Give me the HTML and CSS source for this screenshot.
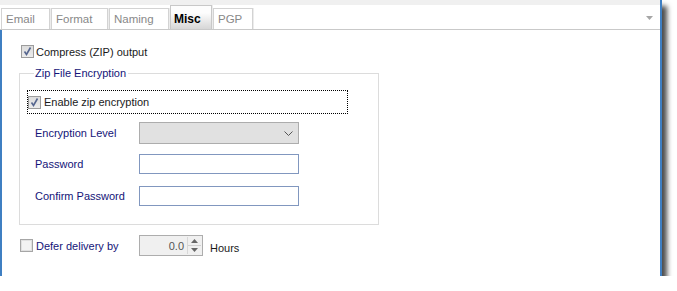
FILE: index.html
```html
<!DOCTYPE html>
<html>
<head>
<meta charset="utf-8">
<link rel="stylesheet" href="styles.css">
</head>
<body>
<div class="window">
  <div class="tabbar">
    <div class="tabs">
      <div class="tab t-email">Email</div>
      <div class="tab t-format">Format</div>
      <div class="tab t-naming">Naming</div>
      <div class="tab t-misc active">Misc</div>
      <div class="tab t-pgp">PGP</div>
    </div>
    <svg class="tabmenu" width="7" height="4" viewBox="0 0 7 4"><polygon points="0,0 7,0 3.5,4" fill="#a6a6a6"/></svg>
  </div>
  <div class="content">
    <div class="check-row compress">
      <span class="cb"><svg width="11" height="11" viewBox="0 0 11 11"><path d="M2.5 5.5 L4.5 8.5 L8.5 1.5" fill="none" stroke="#56668f" stroke-width="1.6"/></svg></span>
      <span class="txt">Compress (ZIP) output</span>
    </div>
    <fieldset class="group">
      <legend class="legend">Zip File Encryption</legend>
      <div class="focus-row">
        <span class="cb"><svg width="11" height="11" viewBox="0 0 11 11"><path d="M2.5 5.5 L4.5 8.5 L8.5 1.5" fill="none" stroke="#56668f" stroke-width="1.6"/></svg></span>
        <span class="txt">Enable zip encryption</span>
      </div>
      <div class="form-row r-level">
        <span class="lbl">Encryption Level</span>
        <div class="select"><svg width="9" height="5" viewBox="0 0 9 5"><polyline points="0.5,0.5 4.5,4.5 8.5,0.5" fill="none" stroke="#555" stroke-width="1"/></svg></div>
      </div>
      <div class="form-row r-pw">
        <span class="lbl">Password</span>
        <div class="input"></div>
      </div>
      <div class="form-row r-confirm">
        <span class="lbl">Confirm Password</span>
        <div class="input"></div>
      </div>
    </fieldset>
    <div class="defer-row">
      <span class="cb unchecked"></span>
      <span class="lbl defer-lbl">Defer delivery by</span>
      <div class="spinner">
        <span class="val">0.0</span>
        <span class="spin-btns">
          <span class="sb up"><svg width="7" height="4" viewBox="0 0 7 4"><polygon points="0,4 7,4 3.5,0" fill="#666"/></svg></span>
          <span class="sb down"><svg width="7" height="4" viewBox="0 0 7 4"><polygon points="0,0 7,0 3.5,4" fill="#666"/></svg></span>
        </span>
      </div>
      <span class="hours">Hours</span>
    </div>
  </div>
</div>
</body>
</html>
```

FILE: styles.css
```css
* { box-sizing: border-box; }
body {
  margin: 0;
  background: #fff;
  font-family: "Liberation Sans", Arial, sans-serif;
  font-size: 11px;
  color: #222;
}
.window {
  width: 662px;
  height: 276px;
  background: #fff;
  border-right: 2px solid #3f7fc2;
  box-shadow: 5px 6px 5px rgba(0, 0, 0, 0.7);
  display: flex;
  flex-direction: column;
}
.tabbar {
  height: 30px;
  border-top: 5px solid #f0f0f0;
  border-bottom: 1px solid #c9c9c9;
  display: flex;
  align-items: flex-end;
  justify-content: space-between;
}
.tabs {
  display: flex;
  align-items: flex-end;
  gap: 1px;
  padding-left: 1px;
}
.tab {
  height: 21px;
  border: 1px solid #d3d3d3;
  border-bottom: none;
  box-shadow: 1px 0 0 #ececec;
  background: #fff;
  color: #888;
  font-size: 11.5px;
  line-height: 13px;
  padding: 4px 0 0 4px;
}
.t-email { width: 49px; }
.t-format { width: 57px; }
.t-naming { width: 60px; }
.t-misc { width: 42px; }
.t-pgp { width: 40px; }
.tab.active {
  height: 24px;
  padding-top: 7px;
  padding-left: 3px;
  color: #000;
  font-weight: bold;
  font-size: 12px;
  border-color: #c8c8c8;
  background: linear-gradient(#fdfdfd 30%, #d6d6d6);
}
.tabmenu {
  align-self: center;
  margin-right: 7px;
  margin-top: 1px;
}
.content {
  flex: 1;
  border-left: 2px solid #3f7fc2;
  padding-left: 17px;
  display: flex;
  flex-direction: column;
  align-items: flex-start;
}
.cb {
  width: 13px;
  height: 13px;
  border: 1px solid #9c9c9c;
  background: linear-gradient(#dcdcdc, #ececec);
  display: flex;
  align-items: center;
  justify-content: center;
  flex: none;
}
.cb.unchecked {
  background: #f2f2f2;
  border-color: #a6a6a6;
  box-shadow: inset 0 0 0 1px #e0e0e0;
}
.check-row {
  display: flex;
  align-items: center;
  height: 13px;
}
.compress {
  margin-top: 15px;
  margin-left: 2px;
}
.compress .txt { margin-left: 2px; color: #1a1a1a; }
.group {
  margin: 9px 0 0 0;
  padding: 10px 0 18px 7px;
  width: 360px;
  border: 1px solid #dcdcdc;
  min-width: 0;
}
.legend {
  margin-left: 7px;
  padding: 0 2px 0 1px;
  line-height: 13px;
  color: #141478;
}
.focus-row {
  width: 321px;
  height: 24px;
  border: 1px dotted #000;
  display: flex;
  align-items: center;
}
.focus-row .txt { margin-left: 3px; color: #1a1a1a; }
.form-row {
  display: flex;
  align-items: center;
  margin-left: 8px;
}
.lbl {
  width: 104px;
  color: #141478;
}
.r-level { margin-top: 8px; }
.r-pw { margin-top: 10px; }
.r-confirm { margin-top: 12px; }
.select {
  width: 160px;
  height: 22px;
  border: 1px solid #adadad;
  background: #e1e1e1;
  display: flex;
  align-items: center;
  justify-content: flex-end;
  padding-right: 5px;
}
.input {
  width: 160px;
  height: 20px;
  border: 1px solid #8197bf;
  background: #fff;
}
.defer-row {
  display: flex;
  align-items: center;
  height: 21px;
  margin-top: 10px;
  margin-left: 1px;
}
.defer-lbl {
  margin-left: 3px;
  width: 103px;
}
.spinner {
  width: 64px;
  height: 21px;
  border: 1px solid #adadad;
  background: #f0f0f0;
  display: flex;
  align-items: center;
  justify-content: flex-end;
}
.val {
  color: #555;
  margin-right: 3px;
}
.spin-btns {
  width: 14px;
  height: 17px;
  display: flex;
  flex-direction: column;
  margin-right: 1px;
  border-left: 1px solid #d8d8d8;
}
.sb {
  flex: 1;
  display: flex;
  align-items: center;
  justify-content: center;
}
.sb.up { border-bottom: 1px solid #d0d0d0; }
.hours {
  margin-left: 7px;
  padding-top: 5px;
  color: #1a1a1a;
}
```
